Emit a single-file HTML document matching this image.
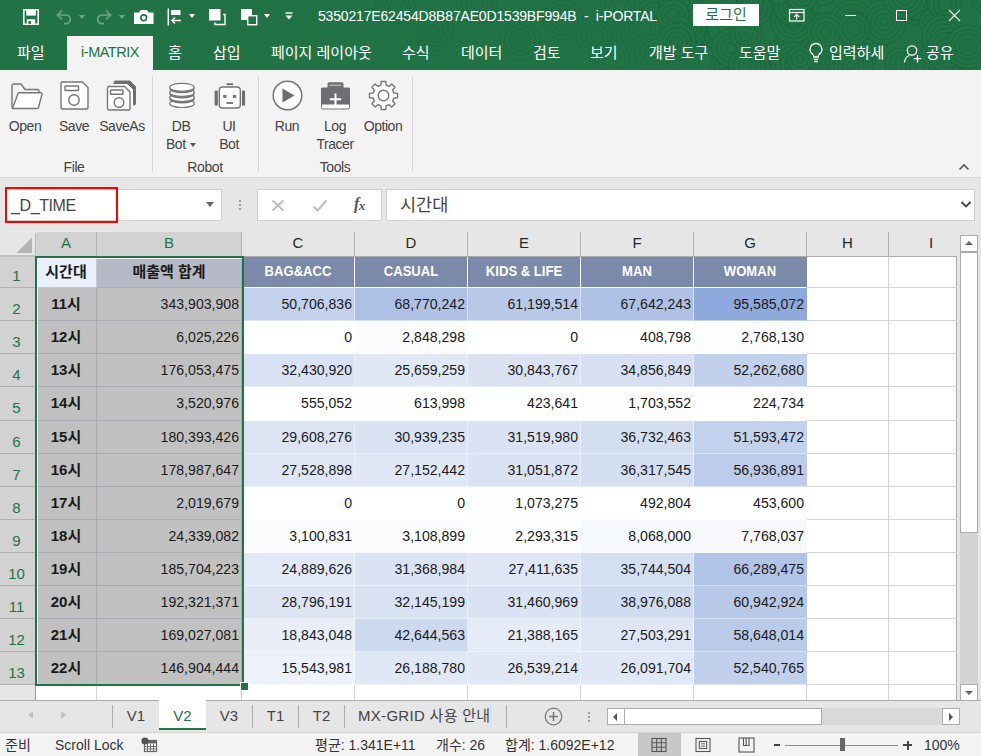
<!DOCTYPE html>
<html lang="ko">
<head>
<meta charset="utf-8">
<title>i-PORTAL</title>
<style>
*{box-sizing:border-box;margin:0;padding:0}
html,body{width:981px;height:756px;overflow:hidden;background:#e6e6e6}
body{position:relative;font-family:"Liberation Sans","Noto Sans CJK KR",sans-serif;font-size:15px;color:#262626}
.abs{position:absolute}
/* title */
#top{position:absolute;left:0;top:0;width:981px;height:70px;background:#217346;overflow:hidden}
#title{position:absolute;left:318px;top:8px;color:#fff;font-size:14px;white-space:nowrap;letter-spacing:-0.17px}
#login{position:absolute;left:693px;top:4px;width:66px;height:22px;background:#fff;color:#217346;font-size:15px;text-align:center;line-height:22px}
.tab{position:absolute;top:36px;height:34px;line-height:33px;color:#fff;font-size:15px;white-space:nowrap}
#tabsel{position:absolute;left:67px;top:36px;width:86px;height:34px;background:#f3f3f3;color:#217346;text-align:center;line-height:33px;font-size:14.5px;letter-spacing:-0.5px}
/* ribbon */
#ribbon{position:absolute;left:0;top:70px;width:981px;height:108px;background:#f3f3f3;border-bottom:1px solid #d4d4d4}
.rb{position:absolute;text-align:center;font-size:14px;letter-spacing:-0.45px;line-height:18px;color:#444;white-space:nowrap}
.grp{position:absolute;top:89px;font-size:14px;letter-spacing:-0.4px;color:#444;text-align:center}
.sep{position:absolute;top:6px;width:1px;height:96px;background:#d8d8d8}
.ico{position:absolute}
.dot{width:2px;height:2px;background:#a0a0a0}
.sbb{background:#fff;border:1px solid #ababab}
.tsep{position:absolute;top:4px;width:1px;height:23px;background:#ababab}
#v2{background:#fff;color:#217346;top:-1px;height:28px;line-height:32px;border-bottom:2px solid #217346;box-sizing:content-box}
.qdd{position:absolute;width:0;height:0;border-left:3.500px solid transparent;border-right:3.500px solid transparent;border-top:4px solid #fff}
.dd{display:inline-block;width:0;height:0;border-left:3.500px solid transparent;border-right:3.500px solid transparent;border-top:4px solid #555;vertical-align:middle;margin-left:1px}
/* formula bar */
#namebox{position:absolute;left:5px;top:189px;width:217px;height:32px;background:#fff;border:1px solid #d0d0d0}
#namebox span{position:absolute;left:5px;top:7px;font-size:16px;letter-spacing:-0.4px;color:#444}
#redbox{position:absolute;left:5px;top:187px;width:113px;height:36px;border:2px solid #f00}
#fxbox{position:absolute;left:257px;top:189px;width:125px;height:32px;background:#fff;border:1px solid #d0d0d0}
#fbox{position:absolute;left:386px;top:189px;width:589px;height:32px;background:#fff;border:1px solid #d0d0d0}
#fbox span{position:absolute;left:13px;top:1px;font-size:17.5px;color:#444}
/* grid */
#gridbg{position:absolute;left:36px;top:255px;width:921px;height:445px;background:#fff}
.ch{position:absolute;top:232px;height:25px;background:#e6e6e6;border-right:1px solid #b1b1b1;border-bottom:1px solid #ababab;text-align:center;font-size:15px;line-height:22px;color:#262626}
.ch.csel{background:#d2d2d2;color:#217346}
.rh{position:absolute;left:0;width:36px;height:33px;background:#e6e6e6;border-bottom:1px solid #b1b1b1;border-right:1px solid #9f9f9f;text-align:center;font-size:15px;color:#262626}
.rh span{position:absolute;left:0;right:2px;top:12px;text-align:center}
.rh.rsel{background:#d2d2d2;color:#217346}
.c{position:absolute;font-size:14.1px;line-height:17px;color:#1a1a1a;white-space:nowrap;border-right:1px solid rgba(255,255,255,.45);border-bottom:1px solid rgba(255,255,255,.45)}
.c span{position:absolute;top:8px}
.c.num span,.c.selB span{right:2px}
.c.hd span,.c.a1 span,.c.b1 span,.c.selA span{font-size:15px;top:7px}
.c.hd{background:#7b8aaa;color:#fff;font-weight:bold;border-right:1px solid #fff;border-bottom:1px solid #fff}
.c.hd span,.c.a1 span,.c.b1 span,.c.selA span{left:0;right:0;text-align:center}
.c.hd span{font-size:14.7px;transform:scaleX(.89)}
.c.a1{background:#e9effb;font-weight:bold;border-color:#c5c8d2}
.c.a1 span,.c.b1 span,.c.hd span{top:8px}
.c.b1{background:#b6bac6;font-weight:bold;border-color:#a8abb5}
.c.selA{background:#c0c0c0;font-weight:bold;border-color:#a8abb5}
.c.selB{background:#c1c1c1;border-color:#a8abb5}
.vl{position:absolute;width:1px;background:#d4d4d4}
.hl{position:absolute;height:1px;background:#d4d4d4}
#selbox{position:absolute;left:34.5px;top:256px;width:209.5px;height:430px;border:2px solid #217346}
#selbox i{position:absolute;left:0;top:0;right:0;bottom:0;border-left:1px solid #fff;border-top:1px solid #fff}
#handle{position:absolute;left:240px;top:682px;width:7px;height:7px;background:#217346;border:1px solid #fff;box-sizing:content-box}
/* scrollbars */
#vsb{position:absolute;left:957px;top:232px;width:24px;height:468px;background:#e6e6e6}
/* bottom */
#tabbar{position:absolute;left:0;top:700px;width:981px;height:32px;background:#e6e6e6;border-top:1px solid #ababab}
.st{position:absolute;top:0;height:31px;line-height:30px;font-size:15px;color:#444;text-align:center;white-space:nowrap}
#status{position:absolute;left:0;top:732px;width:981px;height:24px;background:#f3f3f3;border-top:1px solid #d4d4d4;font-size:14px;color:#333}
#status span{position:absolute;top:3px;white-space:nowrap;line-height:18px}
</style>
</head>
<body>
<div id="top">
<svg class="ico" style="left:0;top:0" width="981" height="70" viewBox="0 0 981 70" fill="#217346" stroke-width="1.200"><circle cx="804" cy="36" r="22.0" stroke="#1c693e"/><circle cx="804" cy="36" r="17.5" stroke="#1c693e"/><circle cx="804" cy="36" r="13.0" stroke="#1c693e"/><circle cx="804" cy="36" r="8.5" stroke="#1c693e"/><circle cx="804" cy="36" r="4.0" stroke="#1c693e"/><circle cx="804" cy="60" r="16.0" stroke="#1c693e"/><circle cx="804" cy="60" r="11.5" stroke="#1c693e"/><circle cx="804" cy="60" r="7.0" stroke="#1c693e"/><circle cx="713" cy="32" r="16.0" stroke="#1c693e"/><circle cx="713" cy="32" r="11.5" stroke="#1c693e"/><circle cx="713" cy="32" r="7.0" stroke="#1c693e"/><circle cx="682" cy="15" r="13.0" stroke="#1c693e"/><circle cx="682" cy="15" r="8.5" stroke="#1c693e"/><circle cx="682" cy="15" r="4.0" stroke="#1c693e"/><circle cx="833" cy="63" r="13.0" stroke="#1c693e"/><circle cx="833" cy="63" r="8.5" stroke="#1c693e"/><circle cx="833" cy="63" r="4.0" stroke="#1c693e"/><circle cx="852" cy="22" r="22.0" stroke="#1c693e"/><circle cx="852" cy="22" r="17.5" stroke="#1c693e"/><circle cx="852" cy="22" r="13.0" stroke="#1c693e"/><circle cx="852" cy="22" r="8.5" stroke="#1c693e"/><circle cx="852" cy="22" r="4.0" stroke="#1c693e"/><circle cx="872" cy="40" r="16.0" stroke="#1c693e"/><circle cx="872" cy="40" r="11.5" stroke="#1c693e"/><circle cx="872" cy="40" r="7.0" stroke="#1c693e"/><circle cx="862" cy="58" r="13.0" stroke="#1c693e"/><circle cx="862" cy="58" r="8.5" stroke="#1c693e"/><circle cx="862" cy="58" r="4.0" stroke="#1c693e"/><circle cx="670" cy="6" r="16.0" stroke="#1c693e"/><circle cx="670" cy="6" r="11.5" stroke="#1c693e"/><circle cx="670" cy="6" r="7.0" stroke="#1c693e"/><circle cx="854" cy="54" r="19.0" stroke="#1c693e"/><circle cx="854" cy="54" r="14.5" stroke="#1c693e"/><circle cx="854" cy="54" r="10.0" stroke="#1c693e"/><circle cx="854" cy="54" r="5.5" stroke="#1c693e"/><circle cx="800" cy="59" r="16.0" stroke="#1c693e"/><circle cx="800" cy="59" r="11.5" stroke="#1c693e"/><circle cx="800" cy="59" r="7.0" stroke="#1c693e"/><circle cx="868" cy="31" r="13.0" stroke="#1c693e"/><circle cx="868" cy="31" r="8.5" stroke="#1c693e"/><circle cx="868" cy="31" r="4.0" stroke="#1c693e"/><circle cx="805" cy="13" r="13.0" stroke="#1c693e"/><circle cx="805" cy="13" r="8.5" stroke="#1c693e"/><circle cx="805" cy="13" r="4.0" stroke="#1c693e"/><circle cx="891" cy="16" r="16.0" stroke="#1c693e"/><circle cx="891" cy="16" r="11.5" stroke="#1c693e"/><circle cx="891" cy="16" r="7.0" stroke="#1c693e"/><circle cx="824" cy="-8" r="13.0" stroke="#1c693e"/><circle cx="824" cy="-8" r="8.5" stroke="#1c693e"/><circle cx="824" cy="-8" r="4.0" stroke="#1c693e"/><circle cx="786" cy="59" r="22.0" stroke="#1c693e"/><circle cx="786" cy="59" r="17.5" stroke="#1c693e"/><circle cx="786" cy="59" r="13.0" stroke="#1c693e"/><circle cx="786" cy="59" r="8.5" stroke="#1c693e"/><circle cx="786" cy="59" r="4.0" stroke="#1c693e"/><circle cx="673" cy="-9" r="13.0" stroke="#1c693e"/><circle cx="673" cy="-9" r="8.5" stroke="#1c693e"/><circle cx="673" cy="-9" r="4.0" stroke="#1c693e"/><circle cx="723" cy="66" r="13.0" stroke="#1c693e"/><circle cx="723" cy="66" r="8.5" stroke="#1c693e"/><circle cx="723" cy="66" r="4.0" stroke="#1c693e"/><circle cx="810" cy="70" r="22.0" stroke="#1c693e"/><circle cx="810" cy="70" r="17.5" stroke="#1c693e"/><circle cx="810" cy="70" r="13.0" stroke="#1c693e"/><circle cx="810" cy="70" r="8.5" stroke="#1c693e"/><circle cx="810" cy="70" r="4.0" stroke="#1c693e"/><circle cx="793" cy="36" r="16.0" stroke="#1c693e"/><circle cx="793" cy="36" r="11.5" stroke="#1c693e"/><circle cx="793" cy="36" r="7.0" stroke="#1c693e"/><circle cx="915" cy="12" r="13.0" stroke="#1c693e"/><circle cx="915" cy="12" r="8.5" stroke="#1c693e"/><circle cx="915" cy="12" r="4.0" stroke="#1c693e"/><circle cx="756" cy="-9" r="22.0" stroke="#1c693e"/><circle cx="756" cy="-9" r="17.5" stroke="#1c693e"/><circle cx="756" cy="-9" r="13.0" stroke="#1c693e"/><circle cx="756" cy="-9" r="8.5" stroke="#1c693e"/><circle cx="756" cy="-9" r="4.0" stroke="#1c693e"/><circle cx="908" cy="-0" r="16.0" stroke="#1c693e"/><circle cx="908" cy="-0" r="11.5" stroke="#1c693e"/><circle cx="908" cy="-0" r="7.0" stroke="#1c693e"/><circle cx="890" cy="-9" r="22.0" stroke="#1c693e"/><circle cx="890" cy="-9" r="17.5" stroke="#1c693e"/><circle cx="890" cy="-9" r="13.0" stroke="#1c693e"/><circle cx="890" cy="-9" r="8.5" stroke="#1c693e"/><circle cx="890" cy="-9" r="4.0" stroke="#1c693e"/><circle cx="921" cy="5" r="16.0" stroke="#1c693e"/><circle cx="921" cy="5" r="11.5" stroke="#1c693e"/><circle cx="921" cy="5" r="7.0" stroke="#1c693e"/><circle cx="802" cy="6" r="16.0" stroke="#1c693e"/><circle cx="802" cy="6" r="11.5" stroke="#1c693e"/><circle cx="802" cy="6" r="7.0" stroke="#1c693e"/><circle cx="793" cy="21" r="22.0" stroke="#1c693e"/><circle cx="793" cy="21" r="17.5" stroke="#1c693e"/><circle cx="793" cy="21" r="13.0" stroke="#1c693e"/><circle cx="793" cy="21" r="8.5" stroke="#1c693e"/><circle cx="793" cy="21" r="4.0" stroke="#1c693e"/><circle cx="793" cy="7" r="19.0" stroke="#1c693e"/><circle cx="793" cy="7" r="14.5" stroke="#1c693e"/><circle cx="793" cy="7" r="10.0" stroke="#1c693e"/><circle cx="793" cy="7" r="5.5" stroke="#1c693e"/><circle cx="944" cy="70" r="19.0" stroke="#1c693e"/><circle cx="944" cy="70" r="14.5" stroke="#1c693e"/><circle cx="944" cy="70" r="10.0" stroke="#1c693e"/><circle cx="944" cy="70" r="5.5" stroke="#1c693e"/><circle cx="989" cy="-8" r="16.0" stroke="#1c693e"/><circle cx="989" cy="-8" r="11.5" stroke="#1c693e"/><circle cx="989" cy="-8" r="7.0" stroke="#1c693e"/><circle cx="784" cy="60" r="13.0" stroke="#1c693e"/><circle cx="784" cy="60" r="8.5" stroke="#1c693e"/><circle cx="784" cy="60" r="4.0" stroke="#1c693e"/><circle cx="664" cy="2" r="22.0" stroke="#1c693e"/><circle cx="664" cy="2" r="17.5" stroke="#1c693e"/><circle cx="664" cy="2" r="13.0" stroke="#1c693e"/><circle cx="664" cy="2" r="8.5" stroke="#1c693e"/><circle cx="664" cy="2" r="4.0" stroke="#1c693e"/><circle cx="738" cy="53" r="19.0" stroke="#1c693e"/><circle cx="738" cy="53" r="14.5" stroke="#1c693e"/><circle cx="738" cy="53" r="10.0" stroke="#1c693e"/><circle cx="738" cy="53" r="5.5" stroke="#1c693e"/><circle cx="932" cy="22" r="13.0" stroke="#1c693e"/><circle cx="932" cy="22" r="8.5" stroke="#1c693e"/><circle cx="932" cy="22" r="4.0" stroke="#1c693e"/><circle cx="681" cy="38" r="16.0" stroke="#1c693e"/><circle cx="681" cy="38" r="11.5" stroke="#1c693e"/><circle cx="681" cy="38" r="7.0" stroke="#1c693e"/><circle cx="655" cy="20" r="22.0" stroke="#1c693e"/><circle cx="655" cy="20" r="17.5" stroke="#1c693e"/><circle cx="655" cy="20" r="13.0" stroke="#1c693e"/><circle cx="655" cy="20" r="8.5" stroke="#1c693e"/><circle cx="655" cy="20" r="4.0" stroke="#1c693e"/><circle cx="693" cy="38" r="16.0" stroke="#1c693e"/><circle cx="693" cy="38" r="11.5" stroke="#1c693e"/><circle cx="693" cy="38" r="7.0" stroke="#1c693e"/><circle cx="945" cy="5" r="16.0" stroke="#1c693e"/><circle cx="945" cy="5" r="11.5" stroke="#1c693e"/><circle cx="945" cy="5" r="7.0" stroke="#1c693e"/><circle cx="756" cy="9" r="16.0" stroke="#1c693e"/><circle cx="756" cy="9" r="11.5" stroke="#1c693e"/><circle cx="756" cy="9" r="7.0" stroke="#1c693e"/><circle cx="897" cy="3" r="16.0" stroke="#1c693e"/><circle cx="897" cy="3" r="11.5" stroke="#1c693e"/><circle cx="897" cy="3" r="7.0" stroke="#1c693e"/><circle cx="884" cy="22" r="22.0" stroke="#1c693e"/><circle cx="884" cy="22" r="17.5" stroke="#1c693e"/><circle cx="884" cy="22" r="13.0" stroke="#1c693e"/><circle cx="884" cy="22" r="8.5" stroke="#1c693e"/><circle cx="884" cy="22" r="4.0" stroke="#1c693e"/><circle cx="855" cy="25" r="13.0" stroke="#1c693e"/><circle cx="855" cy="25" r="8.5" stroke="#1c693e"/><circle cx="855" cy="25" r="4.0" stroke="#1c693e"/><circle cx="687" cy="32" r="19.0" stroke="#1c693e"/><circle cx="687" cy="32" r="14.5" stroke="#1c693e"/><circle cx="687" cy="32" r="10.0" stroke="#1c693e"/><circle cx="687" cy="32" r="5.5" stroke="#1c693e"/><circle cx="731" cy="48" r="19.0" stroke="#1c693e"/><circle cx="731" cy="48" r="14.5" stroke="#1c693e"/><circle cx="731" cy="48" r="10.0" stroke="#1c693e"/><circle cx="731" cy="48" r="5.5" stroke="#1c693e"/><circle cx="793" cy="64" r="22.0" stroke="#1c693e"/><circle cx="793" cy="64" r="17.5" stroke="#1c693e"/><circle cx="793" cy="64" r="13.0" stroke="#1c693e"/><circle cx="793" cy="64" r="8.5" stroke="#1c693e"/><circle cx="793" cy="64" r="4.0" stroke="#1c693e"/><circle cx="750" cy="4" r="13.0" stroke="#1c693e"/><circle cx="750" cy="4" r="8.5" stroke="#1c693e"/><circle cx="750" cy="4" r="4.0" stroke="#1c693e"/><circle cx="693" cy="29" r="13.0" stroke="#1c693e"/><circle cx="693" cy="29" r="8.5" stroke="#1c693e"/><circle cx="693" cy="29" r="4.0" stroke="#1c693e"/><circle cx="745" cy="65" r="16.0" stroke="#1c693e"/><circle cx="745" cy="65" r="11.5" stroke="#1c693e"/><circle cx="745" cy="65" r="7.0" stroke="#1c693e"/><circle cx="905" cy="-4" r="22.0" stroke="#1c693e"/><circle cx="905" cy="-4" r="17.5" stroke="#1c693e"/><circle cx="905" cy="-4" r="13.0" stroke="#1c693e"/><circle cx="905" cy="-4" r="8.5" stroke="#1c693e"/><circle cx="905" cy="-4" r="4.0" stroke="#1c693e"/><circle cx="802" cy="-5" r="16.0" stroke="#1c693e"/><circle cx="802" cy="-5" r="11.5" stroke="#1c693e"/><circle cx="802" cy="-5" r="7.0" stroke="#1c693e"/><circle cx="746" cy="34" r="16.0" stroke="#1c693e"/><circle cx="746" cy="34" r="11.5" stroke="#1c693e"/><circle cx="746" cy="34" r="7.0" stroke="#1c693e"/><circle cx="681" cy="1" r="22.0" stroke="#1c693e"/><circle cx="681" cy="1" r="17.5" stroke="#1c693e"/><circle cx="681" cy="1" r="13.0" stroke="#1c693e"/><circle cx="681" cy="1" r="8.5" stroke="#1c693e"/><circle cx="681" cy="1" r="4.0" stroke="#1c693e"/><circle cx="983" cy="44" r="16.0" stroke="#1c693e"/><circle cx="983" cy="44" r="11.5" stroke="#1c693e"/><circle cx="983" cy="44" r="7.0" stroke="#1c693e"/><circle cx="851" cy="66" r="22.0" stroke="#1c693e"/><circle cx="851" cy="66" r="17.5" stroke="#1c693e"/><circle cx="851" cy="66" r="13.0" stroke="#1c693e"/><circle cx="851" cy="66" r="8.5" stroke="#1c693e"/><circle cx="851" cy="66" r="4.0" stroke="#1c693e"/><circle cx="959" cy="47" r="13.0" stroke="#1c693e"/><circle cx="959" cy="47" r="8.5" stroke="#1c693e"/><circle cx="959" cy="47" r="4.0" stroke="#1c693e"/><circle cx="657" cy="42" r="22.0" stroke="#1c693e"/><circle cx="657" cy="42" r="17.5" stroke="#1c693e"/><circle cx="657" cy="42" r="13.0" stroke="#1c693e"/><circle cx="657" cy="42" r="8.5" stroke="#1c693e"/><circle cx="657" cy="42" r="4.0" stroke="#1c693e"/><circle cx="673" cy="16" r="16.0" stroke="#1c693e"/><circle cx="673" cy="16" r="11.5" stroke="#1c693e"/><circle cx="673" cy="16" r="7.0" stroke="#1c693e"/><circle cx="990" cy="-4" r="19.0" stroke="#1c693e"/><circle cx="990" cy="-4" r="14.5" stroke="#1c693e"/><circle cx="990" cy="-4" r="10.0" stroke="#1c693e"/><circle cx="990" cy="-4" r="5.5" stroke="#1c693e"/><circle cx="901" cy="64" r="16.0" stroke="#1c693e"/><circle cx="901" cy="64" r="11.5" stroke="#1c693e"/><circle cx="901" cy="64" r="7.0" stroke="#1c693e"/><circle cx="920" cy="65" r="19.0" stroke="#1c693e"/><circle cx="920" cy="65" r="14.5" stroke="#1c693e"/><circle cx="920" cy="65" r="10.0" stroke="#1c693e"/><circle cx="920" cy="65" r="5.5" stroke="#1c693e"/><circle cx="679" cy="29" r="13.0" stroke="#1c693e"/><circle cx="679" cy="29" r="8.5" stroke="#1c693e"/><circle cx="679" cy="29" r="4.0" stroke="#1c693e"/><circle cx="946" cy="24" r="13.0" stroke="#1c693e"/><circle cx="946" cy="24" r="8.5" stroke="#1c693e"/><circle cx="946" cy="24" r="4.0" stroke="#1c693e"/><circle cx="944" cy="37" r="22.0" stroke="#1c693e"/><circle cx="944" cy="37" r="17.5" stroke="#1c693e"/><circle cx="944" cy="37" r="13.0" stroke="#1c693e"/><circle cx="944" cy="37" r="8.5" stroke="#1c693e"/><circle cx="944" cy="37" r="4.0" stroke="#1c693e"/><circle cx="779" cy="-9" r="13.0" stroke="#1c693e"/><circle cx="779" cy="-9" r="8.5" stroke="#1c693e"/><circle cx="779" cy="-9" r="4.0" stroke="#1c693e"/><circle cx="677" cy="42" r="19.0" stroke="#1c693e"/><circle cx="677" cy="42" r="14.5" stroke="#1c693e"/><circle cx="677" cy="42" r="10.0" stroke="#1c693e"/><circle cx="677" cy="42" r="5.5" stroke="#1c693e"/><circle cx="949" cy="50" r="22.0" stroke="#1c693e"/><circle cx="949" cy="50" r="17.5" stroke="#1c693e"/><circle cx="949" cy="50" r="13.0" stroke="#1c693e"/><circle cx="949" cy="50" r="8.5" stroke="#1c693e"/><circle cx="949" cy="50" r="4.0" stroke="#1c693e"/><circle cx="968" cy="47" r="22.0" stroke="#1c693e"/><circle cx="968" cy="47" r="17.5" stroke="#1c693e"/><circle cx="968" cy="47" r="13.0" stroke="#1c693e"/><circle cx="968" cy="47" r="8.5" stroke="#1c693e"/><circle cx="968" cy="47" r="4.0" stroke="#1c693e"/><circle cx="800" cy="59" r="13.0" stroke="#1c693e"/><circle cx="800" cy="59" r="8.5" stroke="#1c693e"/><circle cx="800" cy="59" r="4.0" stroke="#1c693e"/><circle cx="826" cy="32" r="19.0" stroke="#1c693e"/><circle cx="826" cy="32" r="14.5" stroke="#1c693e"/><circle cx="826" cy="32" r="10.0" stroke="#1c693e"/><circle cx="826" cy="32" r="5.5" stroke="#1c693e"/><circle cx="854" cy="29" r="16.0" stroke="#1c693e"/><circle cx="854" cy="29" r="11.5" stroke="#1c693e"/><circle cx="854" cy="29" r="7.0" stroke="#1c693e"/><circle cx="433" cy="31" r="20.0" stroke="#1e6d41"/><circle cx="433" cy="31" r="15.5" stroke="#1e6d41"/><circle cx="433" cy="31" r="11.0" stroke="#1e6d41"/><circle cx="433" cy="31" r="6.5" stroke="#1e6d41"/><circle cx="477" cy="3" r="20.0" stroke="#1e6d41"/><circle cx="477" cy="3" r="15.5" stroke="#1e6d41"/><circle cx="477" cy="3" r="11.0" stroke="#1e6d41"/><circle cx="477" cy="3" r="6.5" stroke="#1e6d41"/><circle cx="563" cy="20" r="20.0" stroke="#1e6d41"/><circle cx="563" cy="20" r="15.5" stroke="#1e6d41"/><circle cx="563" cy="20" r="11.0" stroke="#1e6d41"/><circle cx="563" cy="20" r="6.5" stroke="#1e6d41"/><circle cx="597" cy="36" r="20.0" stroke="#1e6d41"/><circle cx="597" cy="36" r="15.5" stroke="#1e6d41"/><circle cx="597" cy="36" r="11.0" stroke="#1e6d41"/><circle cx="597" cy="36" r="6.5" stroke="#1e6d41"/><circle cx="620" cy="8" r="20.0" stroke="#1e6d41"/><circle cx="620" cy="8" r="15.5" stroke="#1e6d41"/><circle cx="620" cy="8" r="11.0" stroke="#1e6d41"/><circle cx="620" cy="8" r="6.5" stroke="#1e6d41"/><circle cx="395" cy="8" r="20.0" stroke="#1e6d41"/><circle cx="395" cy="8" r="15.5" stroke="#1e6d41"/><circle cx="395" cy="8" r="11.0" stroke="#1e6d41"/><circle cx="395" cy="8" r="6.5" stroke="#1e6d41"/><circle cx="520" cy="40" r="20.0" stroke="#1e6d41"/><circle cx="520" cy="40" r="15.5" stroke="#1e6d41"/><circle cx="520" cy="40" r="11.0" stroke="#1e6d41"/><circle cx="520" cy="40" r="6.5" stroke="#1e6d41"/><circle cx="640" cy="30" r="20.0" stroke="#1e6d41"/><circle cx="640" cy="30" r="15.5" stroke="#1e6d41"/><circle cx="640" cy="30" r="11.0" stroke="#1e6d41"/><circle cx="640" cy="30" r="6.5" stroke="#1e6d41"/><circle cx="655" cy="55" r="20.0" stroke="#1e6d41"/><circle cx="655" cy="55" r="15.5" stroke="#1e6d41"/><circle cx="655" cy="55" r="11.0" stroke="#1e6d41"/><circle cx="655" cy="55" r="6.5" stroke="#1e6d41"/><circle cx="610" cy="60" r="20.0" stroke="#1e6d41"/><circle cx="610" cy="60" r="15.5" stroke="#1e6d41"/><circle cx="610" cy="60" r="11.0" stroke="#1e6d41"/><circle cx="610" cy="60" r="6.5" stroke="#1e6d41"/></svg>
<!--QAT-START-->
<svg class="ico" style="left:22px;top:8px" width="18" height="18" viewBox="0 0 18 18"><path d="M1.800 1.800h14.400v14.400H1.800z" fill="none" stroke="#fff" stroke-width="1.600"/><rect x="4.200" y="2" width="9.600" height="5.600" fill="#fff"/><rect x="4.800" y="11.200" width="8.400" height="5" fill="#fff"/><rect x="6.500" y="13" width="2.400" height="3.200" fill="#217346"/></svg>
<svg class="ico" style="left:55px;top:9px" width="18" height="16" viewBox="0 0 18 16" fill="none" stroke="#6fa687" stroke-width="1.700"><path d="M7 1.500 2.500 6 7 10.500"/><path d="M2.500 6h8.500a4.300 4.300 0 0 1 0 8.600H9"/></svg>
<i class="qdd" style="left:79px;top:15px;border-top-color:#6fa687"></i>
<svg class="ico" style="left:95px;top:9px" width="18" height="16" viewBox="0 0 18 16" fill="none" stroke="#6fa687" stroke-width="1.700"><path d="M11 1.500 15.500 6 11 10.500"/><path d="M15.500 6H7a4.300 4.300 0 0 0 0 8.600h2"/></svg>
<i class="qdd" style="left:119px;top:15px;border-top-color:#6fa687"></i>
<svg class="ico" style="left:133px;top:9px" width="22" height="16" viewBox="0 0 22 16"><path d="M1 3.500h5l1.500-2.500h6.500l1.500 2.500h5v11.500H1z" fill="#fff"/><circle cx="10.700" cy="8.800" r="3.700" fill="#217346"/><circle cx="10.700" cy="8.800" r="2.100" fill="#fff"/></svg>
<svg class="ico" style="left:166px;top:8px" width="17" height="18" viewBox="0 0 17 18"><path d="M2.300 0.500v17" stroke="#fff" stroke-width="1.500"/><rect x="5" y="2" width="9.500" height="5" fill="#fff"/><path d="M15 12.500H6M9 9.500l-3 3 3 3" fill="none" stroke="#fff" stroke-width="1.500"/></svg>
<i class="qdd" style="left:189px;top:14px"></i>
<svg class="ico" style="left:208px;top:8px" width="19" height="18" viewBox="0 0 19 18"><rect x="1" y="1" width="11.500" height="11.500" fill="#fff"/><path d="M15 6.500h2v10h-10v-2" fill="none" stroke="#fff" stroke-width="1.400"/></svg>
<svg class="ico" style="left:240px;top:8px" width="19" height="18" viewBox="0 0 19 18"><rect x="1" y="1" width="11" height="11" fill="#fff"/><rect x="7.700" y="7.700" width="9" height="9" fill="#217346" stroke="#fff" stroke-width="1.400"/></svg>
<i class="qdd" style="left:264px;top:14px"></i>
<svg class="ico" style="left:284px;top:11px" width="10" height="10" viewBox="0 0 10 10"><path d="M1.500 2h7" stroke="#fff" stroke-width="1.400"/><path d="M1.500 4.500h7L5 8.500z" fill="#fff"/></svg>
<!--QAT-END-->
<div id="title">5350217E62454D8B87AE0D1539BF994B&nbsp; -&nbsp; i-PORTAL</div>
<div id="login">로그인</div>
<!--WB-START-->
<svg class="ico" style="left:788px;top:8px" width="18" height="15" viewBox="0 0 18 15" fill="none" stroke="#fff" stroke-width="1.200"><rect x="1.500" y="1.500" width="14.500" height="11.500"/><path d="M1.500 4.500h14.500"/><path d="M8.700 11.500v-5M6.200 8.800l2.500-2.500 2.500 2.500"/></svg>
<div class="abs" style="left:845px;top:15px;width:11px;height:1px;background:#fff"></div>
<div class="abs" style="left:896px;top:10px;width:11px;height:11px;border:1px solid #fff"></div>
<svg class="ico" style="left:948px;top:9px" width="13" height="13" viewBox="0 0 13 13" stroke="#fff" stroke-width="1.200"><path d="M1 1l11 11M12 1 1 12"/></svg>
<svg class="ico" style="left:808px;top:42px" width="16" height="22" viewBox="0 0 16 22" fill="none" stroke="#fff" stroke-width="1.300"><path d="M8 1.500a5.800 5.800 0 0 1 3.300 10.600c-.8.700-1 1.600-1 2.900h-4.600c0-1.300-.2-2.200-1-2.900A5.800 5.800 0 0 1 8 1.500z"/><path d="M5.700 17.300h4.600M6.200 19.500h3.600"/></svg>
<svg class="ico" style="left:903px;top:44px" width="20" height="20" viewBox="0 0 20 20" fill="none" stroke="#fff" stroke-width="1.300"><circle cx="9" cy="6.500" r="4.700"/><path d="M1.500 18.500c.3-3.600 2-5.800 4.700-7"/><path d="M14.500 11v7.500M10.800 14.700h7.500"/></svg>
<!--WB-END-->
<div class="tab" style="left:17px">파일</div>
<div id="tabsel">i-MATRIX</div>
<div class="tab" style="left:168px">홈</div>
<div class="tab" style="left:213px">삽입</div>
<div class="tab" style="left:271px">페이지 레이아웃</div>
<div class="tab" style="left:402px">수식</div>
<div class="tab" style="left:461px">데이터</div>
<div class="tab" style="left:533px">검토</div>
<div class="tab" style="left:590px">보기</div>
<div class="tab" style="left:649px">개발 도구</div>
<div class="tab" style="left:739px">도움말</div>
<div class="tab" style="left:829px">입력하세</div>
<div class="tab" style="left:926px">공유</div>
</div>
<div id="ribbon">
<!--RIBBON-START-->
<svg class="ico" style="left:9px;top:10px" width="36" height="32" viewBox="0 0 36 32" fill="none" stroke="#767676" stroke-width="1.4" stroke-linejoin="round"><path d="M3 27.5V5.5a1.5 1.5 0 0 1 1.5-1.5H12l4 5.5h12.5a1.5 1.5 0 0 1 1.5 1.5V13"/><path d="M3.5 28.5 9 13.5a1 1 0 0 1 1-.7h22a1 1 0 0 1 1 1.2l-3.5 13.5a1.5 1.5 0 0 1-1.5 1H4.2a.8.8 0 0 1-.7-1z" fill="#fff"/></svg>
<svg class="ico" style="left:59px;top:10px" width="31" height="31" viewBox="0 0 31 31" fill="#fff" stroke="#767676" stroke-width="1.4" stroke-linejoin="round"><path d="M3.5 2h20l5.500 5.500V27.500a1.500 1.500 0 0 1-1.500 1.500H3.500A1.500 1.500 0 0 1 2 27.500v-24A1.500 1.500 0 0 1 3.500 2z"/><rect x="6" y="6" width="13.500" height="4.500" rx=".6"/><circle cx="15" cy="20" r="5.200"/></svg>
<svg class="ico" style="left:105px;top:9px" width="33" height="33" viewBox="0 0 33 33" stroke-linejoin="round"><path d="M9 3.500a1.500 1.500 0 0 1 1.500-1.500H25l5.500 5.500v17a1.500 1.500 0 0 1-1.500 1.500H9z" fill="#6e6e72" stroke="#6e6e72" stroke-width="1"/><path d="M6.500 5.500h16l5 5V26.500a1.500 1.500 0 0 1-1.500 1.500H6.500z" fill="#fff" stroke="#fff" stroke-width="1"/><path d="M4 7.500h15.500l5.500 5.500V29.500a1.500 1.500 0 0 1-1.500 1.500H4A1.500 1.500 0 0 1 2.500 29.500v-20.500A1.500 1.500 0 0 1 4 7.500z" fill="#fff" stroke="#767676" stroke-width="1.400"/><rect x="5.500" y="11" width="12.500" height="4.300" rx=".6" fill="#fff" stroke="#767676" stroke-width="1.400"/><circle cx="14" cy="23.500" r="4.800" fill="#fff" stroke="#767676" stroke-width="1.400"/></svg>
<div class="rb" style="left:0;width:50px;top:47px">Open</div>
<div class="rb" style="left:49px;width:50px;top:47px">Save</div>
<div class="rb" style="left:92px;width:60px;top:47px">SaveAs</div>
<div class="grp" style="left:44px;width:60px">File</div>
<div class="sep" style="left:152px"></div>
<svg class="ico" style="left:166.500px;top:12px" width="30" height="28" viewBox="0 0 30 28" fill="#fff" stroke="#767676" stroke-width="1.200"><ellipse cx="15" cy="21.5" rx="12.300" ry="4"/><ellipse cx="15" cy="17.3" rx="12.600" ry="4.200" fill="#767676" stroke="none"/><ellipse cx="15" cy="15.5" rx="12.300" ry="4"/><ellipse cx="15" cy="12.2" rx="12.600" ry="4.200" fill="#767676" stroke="none"/><ellipse cx="15" cy="10.4" rx="12.300" ry="4"/><ellipse cx="15" cy="7.1" rx="12.600" ry="4.200" fill="#767676" stroke="none"/><ellipse cx="15" cy="5.3" rx="12.300" ry="4"/></svg>
<svg class="ico" style="left:212px;top:11px" width="35" height="30" viewBox="0 0 35 30" fill="none" stroke="#767676" stroke-width="1.400"><path d="M4.200 10.800v12.400" stroke="#6e6e72" stroke-width="3.200" stroke-linecap="round"/><path d="M31.500 10.800v12.400" stroke="#6e6e72" stroke-width="3.200" stroke-linecap="round"/><rect x="7.300" y="6" width="21" height="21" rx="3.200" fill="#fff"/><path d="M14.500 3.200h6.600" stroke="#6e6e72" stroke-width="1.900"/><rect x="11.200" y="13.900" width="3.300" height="3" fill="#767676" stroke="none"/><rect x="21" y="13.900" width="3.300" height="3" fill="#767676" stroke="none"/><path d="M14.500 22h6.600" stroke-width="1.900"/></svg>
<div class="rb" style="left:156px;width:50px;top:47px">DB<br>Bot <i class="dd"></i></div>
<div class="rb" style="left:204px;width:50px;top:47px">UI<br>Bot</div>
<div class="grp" style="left:175px;width:60px">Robot</div>
<div class="sep" style="left:258px"></div>
<svg class="ico" style="left:271px;top:9px" width="33" height="33" viewBox="0 0 33 33"><circle cx="16.500" cy="16.500" r="14.300" fill="#fff" stroke="#767676" stroke-width="1.500"/><path d="M11.500 9.500 23.500 16.500 11.500 23.500z" fill="#6e6e72"/></svg>
<svg class="ico" style="left:319px;top:10px" width="33" height="31" viewBox="0 0 33 31"><path d="M8.500 8V4a1.800 1.800 0 0 1 1.800-1.800h12.400A1.800 1.800 0 0 1 24.500 4v4z" fill="#6e6e72"/><path d="M10.500 5.200h12" stroke="#cfcfcf" stroke-width="1"/><path d="M3.500 7.500h26A1.500 1.500 0 0 1 31 9V24H2V9A1.500 1.500 0 0 1 3.500 7.500z" fill="#6e6e72"/><path d="M2.500 24h28v3.500a1.500 1.500 0 0 1-1.500 1.500h-25a1.500 1.500 0 0 1-1.500-1.500z" fill="#fff" stroke="#6e6e72" stroke-width="1"/><path d="M16.500 13.500v11.500M10.800 19.200h11.400" stroke="#fff" stroke-width="2"/></svg>
<svg class="ico" style="left:366.600px;top:9.200px" width="33" height="33" viewBox="0 0 33 33" fill="#fff" stroke="#767676" stroke-width="1.400" stroke-linejoin="round"><path d="M13.94 6.21 L14.16 2.49 L18.84 2.49 L19.06 6.21 L21.96 7.41 L24.75 4.94 L28.06 8.25 L25.59 11.04 L26.79 13.94 L30.51 14.16 L30.51 18.84 L26.79 19.06 L25.59 21.96 L28.06 24.75 L24.75 28.06 L21.96 25.59 L19.06 26.79 L18.84 30.51 L14.16 30.51 L13.94 26.79 L11.04 25.59 L8.25 28.06 L4.94 24.75 L7.41 21.96 L6.21 19.06 L2.49 18.84 L2.49 14.16 L6.21 13.94 L7.41 11.04 L4.94 8.25 L8.25 4.94 L11.04 7.41z"/><circle cx="16.500" cy="16.500" r="5.300"/></svg>
<div class="rb" style="left:262px;width:50px;top:47px">Run</div>
<div class="rb" style="left:310px;width:50px;top:47px">Log<br>Tracer</div>
<div class="rb" style="left:353px;width:60px;top:47px">Option</div>
<div class="grp" style="left:305px;width:60px">Tools</div>
<div class="sep" style="left:412px"></div>
<svg class="ico" style="left:958px;top:93px" width="12" height="8" viewBox="0 0 12 8" fill="none" stroke="#555" stroke-width="1.600"><path d="M1.500 6.500 6 2l4.500 4.500"/></svg>
<!--RIBBON-END-->
</div>
<div id="namebox"><span>_D_TIME</span></div>
<div id="redbox"></div>
<div id="fxbox"></div>
<div id="fbox"><span>시간대</span></div>
<!--FBICONS-START-->
<i class="abs" style="left:206px;top:202px;width:0;height:0;border-left:4.500px solid transparent;border-right:4.500px solid transparent;border-top:5px solid #666"></i>
<i class="abs dot" style="left:239px;top:200px"></i><i class="abs dot" style="left:239px;top:204px"></i><i class="abs dot" style="left:239px;top:208px"></i>
<svg class="ico" style="left:271px;top:199px" width="14" height="13" viewBox="0 0 14 13" stroke="#bdbdbd" stroke-width="1.800" fill="none"><path d="M1.500 1.500l11 10M12.500 1.500l-11 10"/></svg>
<svg class="ico" style="left:312px;top:199px" width="16" height="13" viewBox="0 0 16 13" stroke="#bdbdbd" stroke-width="2" fill="none"><path d="M1.500 7.500l4 4L14.500 1.500"/></svg>
<div class="abs" style="left:354px;top:194px;font-family:'Liberation Serif',serif;font-style:italic;font-weight:bold;font-size:16px;color:#555;letter-spacing:-0.5px;line-height:20px">f<span style="font-size:13px;position:relative;top:1px">x</span></div>
<svg class="ico" style="left:960px;top:200px" width="12" height="9" viewBox="0 0 12 9" fill="none" stroke="#444" stroke-width="1.900"><path d="M1.500 2 6 6.500 10.500 2"/></svg>
<!--FBICONS-END-->
<div id="gridbg"></div>
<svg class="ico" style="left:16px;top:237px" width="17" height="17" viewBox="0 0 17 17"><path d="M16 0.500V16H0.500z" fill="#b4b4b4"/></svg>
<div class="vl" style="left:96px;top:255px;height:445px;"></div>
<div class="vl" style="left:241px;top:255px;height:445px;"></div>
<div class="vl" style="left:354px;top:255px;height:445px;"></div>
<div class="vl" style="left:467px;top:255px;height:445px;"></div>
<div class="vl" style="left:580px;top:255px;height:445px;"></div>
<div class="vl" style="left:693px;top:255px;height:445px;"></div>
<div class="vl" style="left:806px;top:255px;height:445px;"></div>
<div class="vl" style="left:888px;top:255px;height:445px;"></div>
<div class="vl" style="left:956px;top:255px;height:445px;background:#ababab;"></div>
<div class="hl" style="left:36px;top:287px;width:921px"></div>
<div class="hl" style="left:36px;top:320px;width:921px"></div>
<div class="hl" style="left:36px;top:353px;width:921px"></div>
<div class="hl" style="left:36px;top:386px;width:921px"></div>
<div class="hl" style="left:36px;top:420px;width:921px"></div>
<div class="hl" style="left:36px;top:453px;width:921px"></div>
<div class="hl" style="left:36px;top:486px;width:921px"></div>
<div class="hl" style="left:36px;top:519px;width:921px"></div>
<div class="hl" style="left:36px;top:552px;width:921px"></div>
<div class="hl" style="left:36px;top:585px;width:921px"></div>
<div class="hl" style="left:36px;top:618px;width:921px"></div>
<div class="hl" style="left:36px;top:651px;width:921px"></div>
<div class="hl" style="left:36px;top:684px;width:921px"></div>
<div class="hl" style="left:36px;top:717px;width:921px"></div>
<div class="c a1" style="left:36px;top:255px;width:61px;height:33px;"><span>시간대</span></div>
<div class="c b1" style="left:97px;top:255px;width:145px;height:33px;"><span>매출액 합계</span></div>
<div class="c hd" style="left:242px;top:255px;width:113px;height:33px;"><span>BAG&ACC</span></div>
<div class="c hd" style="left:355px;top:255px;width:113px;height:33px;"><span>CASUAL</span></div>
<div class="c hd" style="left:468px;top:255px;width:113px;height:33px;"><span>KIDS & LIFE</span></div>
<div class="c hd" style="left:581px;top:255px;width:113px;height:33px;"><span>MAN</span></div>
<div class="c hd" style="left:694px;top:255px;width:113px;height:33px;border-right-color:transparent;"><span>WOMAN</span></div>
<div class="c selA" style="left:36px;top:288px;width:61px;height:33px;"><span>11시</span></div>
<div class="c selB" style="left:97px;top:288px;width:145px;height:33px;"><span>343,903,908</span></div>
<div class="c num" style="left:242px;top:288px;width:113px;height:33px;background:rgb(195,209,236);"><span>50,706,836</span></div>
<div class="c num" style="left:355px;top:288px;width:113px;height:33px;background:rgb(174,193,229);"><span>68,770,242</span></div>
<div class="c num" style="left:468px;top:288px;width:113px;height:33px;background:rgb(183,200,232);"><span>61,199,514</span></div>
<div class="c num" style="left:581px;top:288px;width:113px;height:33px;background:rgb(175,194,230);"><span>67,642,243</span></div>
<div class="c num" style="left:694px;top:288px;width:113px;height:33px;background:rgb(142,169,219);border-right-color:transparent;"><span>95,585,072</span></div>
<div class="c selA" style="left:36px;top:321px;width:61px;height:33px;"><span>12시</span></div>
<div class="c selB" style="left:97px;top:321px;width:145px;height:33px;"><span>6,025,226</span></div>
<div class="c num" style="left:242px;top:321px;width:113px;height:33px;background:rgb(255,255,255);"><span>0</span></div>
<div class="c num" style="left:355px;top:321px;width:113px;height:33px;background:rgb(252,252,254);"><span>2,848,298</span></div>
<div class="c num" style="left:468px;top:321px;width:113px;height:33px;background:rgb(255,255,255);"><span>0</span></div>
<div class="c num" style="left:581px;top:321px;width:113px;height:33px;background:rgb(255,255,255);"><span>408,798</span></div>
<div class="c num" style="left:694px;top:321px;width:113px;height:33px;background:rgb(252,253,254);border-right-color:transparent;"><span>2,768,130</span></div>
<div class="c selA" style="left:36px;top:354px;width:61px;height:33px;"><span>13시</span></div>
<div class="c selB" style="left:97px;top:354px;width:145px;height:33px;"><span>176,053,475</span></div>
<div class="c num" style="left:242px;top:354px;width:113px;height:33px;background:rgb(217,226,243);"><span>32,430,920</span></div>
<div class="c num" style="left:355px;top:354px;width:113px;height:33px;background:rgb(225,232,245);"><span>25,659,259</span></div>
<div class="c num" style="left:468px;top:354px;width:113px;height:33px;background:rgb(219,227,243);"><span>30,843,767</span></div>
<div class="c num" style="left:581px;top:354px;width:113px;height:33px;background:rgb(214,224,242);"><span>34,856,849</span></div>
<div class="c num" style="left:694px;top:354px;width:113px;height:33px;background:rgb(193,208,235);border-right-color:transparent;"><span>52,262,680</span></div>
<div class="c selA" style="left:36px;top:387px;width:61px;height:34px;"><span>14시</span></div>
<div class="c selB" style="left:97px;top:387px;width:145px;height:34px;"><span>3,520,976</span></div>
<div class="c num" style="left:242px;top:387px;width:113px;height:34px;background:rgb(254,255,255);"><span>555,052</span></div>
<div class="c num" style="left:355px;top:387px;width:113px;height:34px;background:rgb(254,254,255);"><span>613,998</span></div>
<div class="c num" style="left:468px;top:387px;width:113px;height:34px;background:rgb(254,255,255);"><span>423,641</span></div>
<div class="c num" style="left:581px;top:387px;width:113px;height:34px;background:rgb(253,253,254);"><span>1,703,552</span></div>
<div class="c num" style="left:694px;top:387px;width:113px;height:34px;background:rgb(255,255,255);border-right-color:transparent;"><span>224,734</span></div>
<div class="c selA" style="left:36px;top:421px;width:61px;height:33px;"><span>15시</span></div>
<div class="c selB" style="left:97px;top:421px;width:145px;height:33px;"><span>180,393,426</span></div>
<div class="c num" style="left:242px;top:421px;width:113px;height:33px;background:rgb(220,228,244);"><span>29,608,276</span></div>
<div class="c num" style="left:355px;top:421px;width:113px;height:33px;background:rgb(218,227,243);"><span>30,939,235</span></div>
<div class="c num" style="left:468px;top:421px;width:113px;height:33px;background:rgb(218,227,243);"><span>31,519,980</span></div>
<div class="c num" style="left:581px;top:421px;width:113px;height:33px;background:rgb(212,222,241);"><span>36,732,463</span></div>
<div class="c num" style="left:694px;top:421px;width:113px;height:33px;background:rgb(194,209,236);border-right-color:transparent;"><span>51,593,472</span></div>
<div class="c selA" style="left:36px;top:454px;width:61px;height:33px;"><span>16시</span></div>
<div class="c selB" style="left:97px;top:454px;width:145px;height:33px;"><span>178,987,647</span></div>
<div class="c num" style="left:242px;top:454px;width:113px;height:33px;background:rgb(222,230,245);"><span>27,528,898</span></div>
<div class="c num" style="left:355px;top:454px;width:113px;height:33px;background:rgb(223,231,245);"><span>27,152,442</span></div>
<div class="c num" style="left:468px;top:454px;width:113px;height:33px;background:rgb(218,227,243);"><span>31,051,872</span></div>
<div class="c num" style="left:581px;top:454px;width:113px;height:33px;background:rgb(212,222,241);"><span>36,317,545</span></div>
<div class="c num" style="left:694px;top:454px;width:113px;height:33px;background:rgb(188,204,234);border-right-color:transparent;"><span>56,936,891</span></div>
<div class="c selA" style="left:36px;top:487px;width:61px;height:33px;"><span>17시</span></div>
<div class="c selB" style="left:97px;top:487px;width:145px;height:33px;"><span>2,019,679</span></div>
<div class="c num" style="left:242px;top:487px;width:113px;height:33px;background:rgb(255,255,255);"><span>0</span></div>
<div class="c num" style="left:355px;top:487px;width:113px;height:33px;background:rgb(255,255,255);"><span>0</span></div>
<div class="c num" style="left:468px;top:487px;width:113px;height:33px;background:rgb(254,254,255);"><span>1,073,275</span></div>
<div class="c num" style="left:581px;top:487px;width:113px;height:33px;background:rgb(254,255,255);"><span>492,804</span></div>
<div class="c num" style="left:694px;top:487px;width:113px;height:33px;background:rgb(254,255,255);border-right-color:transparent;"><span>453,600</span></div>
<div class="c selA" style="left:36px;top:520px;width:61px;height:33px;"><span>18시</span></div>
<div class="c selB" style="left:97px;top:520px;width:145px;height:33px;"><span>24,339,082</span></div>
<div class="c num" style="left:242px;top:520px;width:113px;height:33px;background:rgb(251,252,254);"><span>3,100,831</span></div>
<div class="c num" style="left:355px;top:520px;width:113px;height:33px;background:rgb(251,252,254);"><span>3,108,899</span></div>
<div class="c num" style="left:468px;top:520px;width:113px;height:33px;background:rgb(252,253,254);"><span>2,293,315</span></div>
<div class="c num" style="left:581px;top:520px;width:113px;height:33px;background:rgb(245,248,252);"><span>8,068,000</span></div>
<div class="c num" style="left:694px;top:520px;width:113px;height:33px;background:rgb(246,248,252);border-right-color:transparent;"><span>7,768,037</span></div>
<div class="c selA" style="left:36px;top:553px;width:61px;height:33px;"><span>19시</span></div>
<div class="c selB" style="left:97px;top:553px;width:145px;height:33px;"><span>185,704,223</span></div>
<div class="c num" style="left:242px;top:553px;width:113px;height:33px;background:rgb(226,233,246);"><span>24,889,626</span></div>
<div class="c num" style="left:355px;top:553px;width:113px;height:33px;background:rgb(218,227,243);"><span>31,368,984</span></div>
<div class="c num" style="left:468px;top:553px;width:113px;height:33px;background:rgb(223,230,245);"><span>27,411,635</span></div>
<div class="c num" style="left:581px;top:553px;width:113px;height:33px;background:rgb(213,223,242);"><span>35,744,504</span></div>
<div class="c num" style="left:694px;top:553px;width:113px;height:33px;background:rgb(177,195,230);border-right-color:transparent;"><span>66,289,475</span></div>
<div class="c selA" style="left:36px;top:586px;width:61px;height:33px;"><span>20시</span></div>
<div class="c selB" style="left:97px;top:586px;width:145px;height:33px;"><span>192,321,371</span></div>
<div class="c num" style="left:242px;top:586px;width:113px;height:33px;background:rgb(221,229,244);"><span>28,796,191</span></div>
<div class="c num" style="left:355px;top:586px;width:113px;height:33px;background:rgb(217,226,243);"><span>32,145,199</span></div>
<div class="c num" style="left:468px;top:586px;width:113px;height:33px;background:rgb(218,227,243);"><span>31,460,969</span></div>
<div class="c num" style="left:581px;top:586px;width:113px;height:33px;background:rgb(209,220,240);"><span>38,976,088</span></div>
<div class="c num" style="left:694px;top:586px;width:113px;height:33px;background:rgb(183,200,232);border-right-color:transparent;"><span>60,942,924</span></div>
<div class="c selA" style="left:36px;top:619px;width:61px;height:33px;"><span>21시</span></div>
<div class="c selB" style="left:97px;top:619px;width:145px;height:33px;"><span>169,027,081</span></div>
<div class="c num" style="left:242px;top:619px;width:113px;height:33px;background:rgb(233,238,248);"><span>18,843,048</span></div>
<div class="c num" style="left:355px;top:619px;width:113px;height:33px;background:rgb(205,217,239);"><span>42,644,563</span></div>
<div class="c num" style="left:468px;top:619px;width:113px;height:33px;background:rgb(230,236,247);"><span>21,388,165</span></div>
<div class="c num" style="left:581px;top:619px;width:113px;height:33px;background:rgb(222,230,245);"><span>27,503,291</span></div>
<div class="c num" style="left:694px;top:619px;width:113px;height:33px;background:rgb(186,202,233);border-right-color:transparent;"><span>58,648,014</span></div>
<div class="c selA" style="left:36px;top:652px;width:61px;height:33px;"><span>22시</span></div>
<div class="c selB" style="left:97px;top:652px;width:145px;height:33px;"><span>146,904,444</span></div>
<div class="c num" style="left:242px;top:652px;width:113px;height:33px;background:rgb(237,241,249);"><span>15,543,981</span></div>
<div class="c num" style="left:355px;top:652px;width:113px;height:33px;background:rgb(224,231,245);"><span>26,188,780</span></div>
<div class="c num" style="left:468px;top:652px;width:113px;height:33px;background:rgb(224,231,245);"><span>26,539,214</span></div>
<div class="c num" style="left:581px;top:652px;width:113px;height:33px;background:rgb(224,232,245);"><span>26,091,704</span></div>
<div class="c num" style="left:694px;top:652px;width:113px;height:33px;background:rgb(193,208,235);border-right-color:transparent;"><span>52,540,765</span></div>
<div class="ch csel" style="left:36px;width:61px;"><span>A</span></div>
<div class="ch csel" style="left:97px;width:145px;"><span>B</span></div>
<div class="ch" style="left:242px;width:113px;"><span>C</span></div>
<div class="ch" style="left:355px;width:113px;"><span>D</span></div>
<div class="ch" style="left:468px;width:113px;"><span>E</span></div>
<div class="ch" style="left:581px;width:113px;"><span>F</span></div>
<div class="ch" style="left:694px;width:113px;"><span>G</span></div>
<div class="ch" style="left:807px;width:82px;"><span>H</span></div>
<div class="ch" style="left:889px;width:68px;padding-left:16px;border-right:none;"><span>I</span></div>
<div class="rh rsel" style="top:255px;height:33px"><span>1</span></div>
<div class="rh rsel" style="top:288px;height:33px"><span>2</span></div>
<div class="rh rsel" style="top:321px;height:33px"><span>3</span></div>
<div class="rh rsel" style="top:354px;height:33px"><span>4</span></div>
<div class="rh rsel" style="top:387px;height:34px"><span>5</span></div>
<div class="rh rsel" style="top:421px;height:33px"><span>6</span></div>
<div class="rh rsel" style="top:454px;height:33px"><span>7</span></div>
<div class="rh rsel" style="top:487px;height:33px"><span>8</span></div>
<div class="rh rsel" style="top:520px;height:33px"><span>9</span></div>
<div class="rh rsel" style="top:553px;height:33px"><span>10</span></div>
<div class="rh rsel" style="top:586px;height:33px"><span>11</span></div>
<div class="rh rsel" style="top:619px;height:33px"><span>12</span></div>
<div class="rh rsel" style="top:652px;height:33px"><span>13</span></div>
<div class="rh" style="top:685px;height:33px"><span>14</span></div>
<div class="abs" style="left:0;top:255px;width:35px;height:2px;background:#c2c2c2"></div>
<div class="abs" style="left:35px;top:233px;width:1px;height:23px;background:#bcbcbc"></div>
<div id="selbox"><i></i></div>
<div id="handle"></div>
<div id="vsb"></div>
<!--VSB-START-->
<div class="abs" style="left:960px;top:252px;width:18px;height:433px;background:#d4d4d4"></div>
<div class="abs sbb" style="left:960px;top:235px;width:18px;height:17px"><i class="abs" style="left:4px;top:5px;width:0;height:0;border-left:4px solid transparent;border-right:4px solid transparent;border-bottom:4.500px solid #666"></i></div>
<div class="abs sbb" style="left:960px;top:252px;width:18px;height:281px"></div>
<div class="abs sbb" style="left:960px;top:684px;width:18px;height:17px"><i class="abs" style="left:4px;top:6px;width:0;height:0;border-left:4px solid transparent;border-right:4px solid transparent;border-top:4.500px solid #666"></i></div>
<!--VSB-END-->
<div id="tabbar">
<!--TABS-START-->
<i class="abs" style="left:28px;top:10px;width:0;height:0;border-top:4.500px solid transparent;border-bottom:4.500px solid transparent;border-right:5px solid #c2c2c2"></i>
<i class="abs" style="left:61px;top:10px;width:0;height:0;border-top:4.500px solid transparent;border-bottom:4.500px solid transparent;border-left:5px solid #c2c2c2"></i>
<div class="tsep" style="left:112px"></div>
<div class="st" style="left:113px;width:46px">V1</div>
<div class="st" id="v2" style="left:159px;width:47px">V2</div>
<div class="st" style="left:206px;width:46px">V3</div>
<div class="tsep" style="left:252px"></div>
<div class="st" style="left:253px;width:45px">T1</div>
<div class="tsep" style="left:298px"></div>
<div class="st" style="left:299px;width:45px">T2</div>
<div class="tsep" style="left:344px"></div>
<div class="st" style="left:358px;text-align:left;letter-spacing:.3px">MX-GRID 사용 안내</div>
<div class="abs" style="left:490px;top:3px;width:2px;height:24px;background:#cfe3f3"></div>
<div class="tsep" style="left:506px"></div>
<svg class="ico" style="left:544px;top:6px" width="19" height="19" viewBox="0 0 19 19" fill="none" stroke="#777" stroke-width="1.200"><circle cx="9.500" cy="9.500" r="8.300"/><path d="M9.500 5v9M5 9.500h9" stroke-width="1.500"/></svg>
<i class="abs dot" style="left:588px;top:11px"></i><i class="abs dot" style="left:588px;top:15px"></i><i class="abs dot" style="left:588px;top:19px"></i>
<div class="abs" style="left:607px;top:7px;width:353px;height:17px;background:#d9d9d9"></div>
<div class="abs sbb" style="left:607px;top:7px;width:18px;height:17px"><i class="abs" style="left:5px;top:4px;width:0;height:0;border-top:4px solid transparent;border-bottom:4px solid transparent;border-right:4.500px solid #555"></i></div>
<div class="abs sbb" style="left:624px;top:7px;width:198px;height:17px"></div>
<div class="abs sbb" style="left:942px;top:7px;width:18px;height:17px"><i class="abs" style="left:6px;top:4px;width:0;height:0;border-top:4px solid transparent;border-bottom:4px solid transparent;border-left:4.500px solid #555"></i></div>
<!--TABS-END-->
</div>
<div id="status">
<span style="left:5px">준비</span>
<span style="left:55px">Scroll Lock</span>
<span style="left:315px">평균: 1.341E+11</span>
<span style="left:436px">개수: 26</span>
<span style="left:505px">합계: 1.6092E+12</span>
<span style="left:924px">100%</span>
<!--STATUSICONS-START-->
<svg class="ico" style="left:141px;top:4px" width="17" height="16" viewBox="0 0 17 16"><rect x="3.500" y="3.500" width="12" height="11" fill="#fff" stroke="#666" stroke-width="1.200"/><rect x="3" y="3" width="13" height="3.500" fill="#666"/><path d="M6.500 7v7.500M9.500 7v7.500M12.500 7v7.500M3.500 9.500h12M3.500 12h12" stroke="#666" stroke-width=".9"/><circle cx="4" cy="4" r="3.600" fill="#555"/></svg>
<div class="abs" style="left:638px;top:0;width:43px;height:24px;background:#c8c8c8"></div>
<svg class="ico" style="left:651px;top:4px" width="16" height="16" viewBox="0 0 16 16" fill="none" stroke="#555" stroke-width="1.100"><rect x="1" y="1.500" width="14" height="13"/><path d="M5.700 1.500v13M10.300 1.500v13M1 5.800h14M1 10.200h14"/></svg>
<svg class="ico" style="left:695px;top:4px" width="16" height="16" viewBox="0 0 16 16" fill="none" stroke="#555" stroke-width="1.100"><rect x="1" y="1.500" width="14" height="13"/><rect x="4.300" y="4.500" width="7.400" height="7"/><path d="M6 6.800h4M6 9.200h4" stroke-width=".9"/></svg>
<svg class="ico" style="left:738px;top:4px" width="17" height="16" viewBox="0 0 17 16" fill="none" stroke="#555" stroke-width="1.100"><rect x="1" y="1" width="15" height="14"/><path d="M5.500 1v7.500h5.500V1M8.200 1v7.500"/></svg>
<div class="abs" style="left:774px;top:11px;width:6px;height:2px;background:#444"></div>
<div class="abs" style="left:785px;top:12px;width:113px;height:1px;background:#8a8a8a"></div>
<div class="abs" style="left:840px;top:5px;width:5px;height:13px;background:#666"></div>
<div class="abs" style="left:903px;top:11px;width:9px;height:2px;background:#444"></div>
<div class="abs" style="left:906.500px;top:7.500px;width:2px;height:9px;background:#444"></div>
<!--STATUSICONS-END-->
</div>
</body>
</html>
